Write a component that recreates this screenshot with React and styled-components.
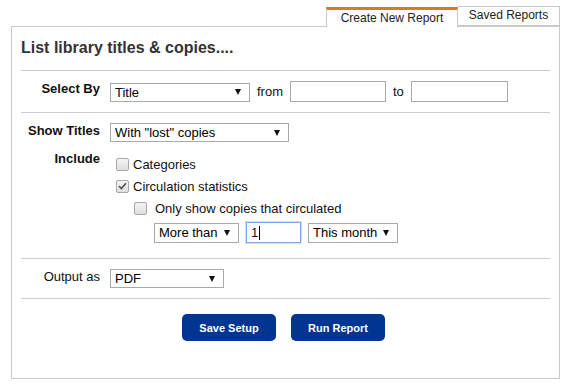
import React from "react";
import styled, { createGlobalStyle } from "styled-components";

const GlobalStyle = createGlobalStyle`
  html, body {
    margin: 0;
    padding: 0;
    background: #fff;
  }
  body {
    font-family: "Liberation Sans", Arial, sans-serif;
    color: #111;
  }
`;

const Page = styled.div`
  width: 549px;
  padding: 6px 0 0 11px;
`;

const TabBar = styled.div`
  display: flex;
  justify-content: flex-end;
  align-items: flex-start;
  position: relative;
  z-index: 1;
  height: 20px;
`;

const Tab = styled.div`
  box-sizing: border-box;
  width: ${(p) => p.width}px;
  height: 20px;
  margin-top: ${(p) => (p.active ? 1 : 0)}px;
  border: 1px solid #c8c8c8;
  border-top: ${(p) => (p.active ? "3px solid #e07a10" : "1px solid #c8c8c8")};
  border-bottom: ${(p) => (p.active ? "none" : "1px solid #c8c8c8")};
  border-left: ${(p) => (p.first ? "1px solid #c8c8c8" : "none")};
  background: #fff;
  font-size: 12px;
  line-height: ${(p) => (p.active ? 16 : 17)}px;
  text-align: center;
  color: #222;
`;

const Box = styled.div`
  box-sizing: border-box;
  width: 549px;
  border: 1px solid #c8c8c8;
  padding: 0 9px;
`;

const Title = styled.div`
  font-size: 16px;
  font-weight: bold;
  line-height: 20px;
  color: #333;
  padding: 11px 0 12px;
  border-bottom: 1px solid #cccccc;
`;

const Section = styled.div`
  padding: ${(p) => p.pad || "10px 0 10px"};
  border-bottom: 1px solid #cccccc;
`;

const Row = styled.div`
  display: flex;
  align-items: flex-start;
  margin-top: ${(p) => p.top || 0}px;
`;

const Label = styled.div`
  width: 79px;
  margin-right: 10px;
  text-align: right;
  font-size: 13px;
  line-height: 15px;
  font-weight: ${(p) => (p.plain ? "normal" : "bold")};
  flex-shrink: 0;
`;

const Controls = styled.div`
  display: flex;
  align-items: center;
  gap: 7px;
  margin-left: ${(p) => p.indent || 0}px;
  margin-top: ${(p) => p.top || 0}px;
`;

const Word = styled.span`
  font-size: 13px;
`;

const SelectBox = styled.div`
  box-sizing: border-box;
  width: ${(p) => p.width}px;
  height: ${(p) => p.height || 19}px;
  margin-top: ${(p) => p.offset || 0}px;
  border: 1px solid #a9a9a9;
  display: flex;
  align-items: center;
  justify-content: space-between;
  padding: 0 8px 0 4px;
  font-size: 13px;
  color: #000;
  background: #fff;
`;

const Arrow = styled.span`
  width: 0;
  height: 0;
  border-left: 3.5px solid transparent;
  border-right: 3.5px solid transparent;
  border-top: 6px solid #111;
`;

const TextBox = styled.div`
  box-sizing: border-box;
  width: ${(p) => p.width}px;
  height: 21px;
  border: 1px solid ${(p) => (p.focused ? "#7da6e8" : "#a9a9a9")};
  box-shadow: ${(p) => (p.focused ? "0 0 0 1px rgba(125,166,232,0.35)" : "none")};
  padding: 0 4px;
  display: flex;
  align-items: center;
  font-size: 13px;
  background: #fff;
`;

const Caret = styled.span`
  display: inline-block;
  width: 1px;
  height: 14px;
  background: #000;
  margin-left: 1px;
`;

const CheckList = styled.div`
  padding-top: 2px;
  margin-left: 6px;
`;

const CheckRow = styled.div`
  display: flex;
  align-items: center;
  height: 22px;
  margin-left: ${(p) => p.indent || 0}px;
  font-size: 13px;
`;

const Box13 = styled.span`
  box-sizing: border-box;
  width: 13px;
  height: 13px;
  border: 1px solid #a8a8a8;
  border-radius: 2px;
  background: linear-gradient(#f4f4f4, #dedede);
  margin-right: ${(p) => p.gap || 4}px;
  display: flex;
  align-items: center;
  justify-content: center;
`;

const ButtonBar = styled.div`
  display: flex;
  justify-content: center;
  gap: 15px;
  padding: 15px 0 37px 0;
  margin-left: -4px;
`;

const Button = styled.button`
  width: 94px;
  height: 27px;
  border: none;
  border-radius: 5px;
  background: #003591;
  color: #fff;
  font-family: "Liberation Sans", Arial, sans-serif;
  font-size: 11px;
  font-weight: bold;
  padding: 0;
`;

function Select({ value, width, offset, height }) {
  return (
    <SelectBox width={width} offset={offset} height={height}>
      <span>{value}</span>
      <Arrow />
    </SelectBox>
  );
}

function Check({ label, checked, indent, gap }) {
  return (
    <CheckRow indent={indent}>
      <Box13 gap={gap}>
        {checked && (
          <svg width="9" height="8" viewBox="0 0 9 8">
            <path d="M1 4.2 L3.4 6.6 L8 1.2" fill="none" stroke="#555" strokeWidth="1.7" />
          </svg>
        )}
      </Box13>
      <span>{label}</span>
    </CheckRow>
  );
}

export default function App() {
  return (
    <Page>
      <GlobalStyle />
      <TabBar>
        <Tab active first width={132}>Create New Report</Tab>
        <Tab width={102}>Saved Reports</Tab>
      </TabBar>
      <Box>
        <Title>List library titles &amp; copies....</Title>

        <Section>
          <Row>
            <Label>Select By</Label>
            <Controls>
              <Select value="Title" width={140} offset={1} />
              <Word>from</Word>
              <TextBox width={96} />
              <Word>to</Word>
              <TextBox width={97} />
            </Controls>
          </Row>
        </Section>

        <Section pad="10px 0 15px">
          <Row>
            <Label>Show Titles</Label>
            <Select value={'With "lost" copies'} width={179} />
          </Row>
          <Row top={9}>
            <Label>Include</Label>
            <div>
              <CheckList>
                <Check label="Categories" />
                <Check label="Circulation statistics" checked />
                <Check label="Only show copies that circulated" indent={18} gap={8} />
              </CheckList>
              <Controls indent={44} top={3}>
                <Select value="More than" width={85} height={20} />
                <TextBox width={55} focused>
                  1<Caret />
                </TextBox>
                <Select value="This month" width={90} height={20} />
              </Controls>
            </div>
          </Row>
        </Section>

        <Section>
          <Row>
            <Label plain>Output as</Label>
            <Select value="PDF" width={114} />
          </Row>
        </Section>

        <ButtonBar>
          <Button>Save Setup</Button>
          <Button>Run Report</Button>
        </ButtonBar>
      </Box>
    </Page>
  );
}
